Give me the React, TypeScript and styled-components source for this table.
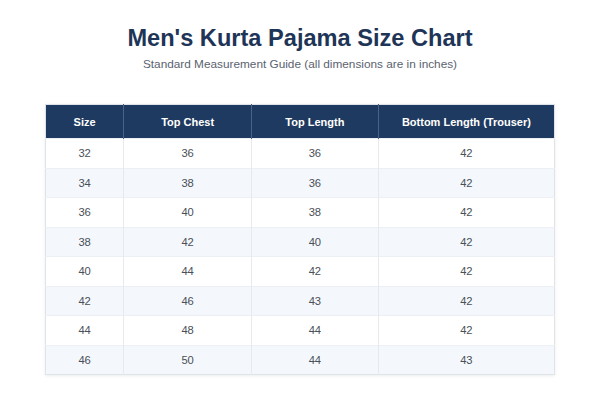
import React from "react";
import styled, { createGlobalStyle } from "styled-components";

const Global = createGlobalStyle`
  html, body { margin: 0; padding: 0; background: #ffffff; }
  body { font-family: "Liberation Sans", Arial, sans-serif; }
`;

const Page = styled.div`
  width: 600px;
  height: 407px;
  box-sizing: border-box;
  padding: 24px 45px 0;
  display: flex;
  flex-direction: column;
  align-items: center;
`;

const Title = styled.h1`
  margin: 0;
  font-size: 23.6px;
  font-weight: 700;
  color: #1e3557;
  line-height: 28px;
`;

const Subtitle = styled.p`
  margin: 4px 0 0;
  font-size: 11.8px;
  color: #5a6270;
  line-height: 16px;
`;

const Table = styled.table`
  margin-top: 32px;
  width: 510px;
  border-collapse: collapse;
  table-layout: fixed;
  border: 1px solid #dfe4ea;
  box-shadow: 0 1px 3px rgba(0, 0, 0, 0.08);
`;

const Th = styled.th<{ $w: string }>`
  width: ${(p) => p.$w};
  background: #1f3a60;
  color: #ffffff;
  font-size: 11px;
  font-weight: 700;
  height: 33px;
  padding: 0;
  text-align: center;
  border-right: 1px solid #4a6283;
  &:last-child { border-right: none; }
`;

const Tr = styled.tr<{ $alt: boolean }>`
  background: ${(p) => (p.$alt ? "#f4f8fc" : "#ffffff")};
`;

const Td = styled.td`
  height: 28.5px;
  padding: 0;
  text-align: center;
  font-size: 11.2px;
  color: #4a4f58;
  border-right: 1px solid #e6eaef;
  border-top: 1px solid #eceff3;
  &:last-child { border-right: none; }
`;

const rows = [
  ["32", "36", "36", "42"],
  ["34", "38", "36", "42"],
  ["36", "40", "38", "42"],
  ["38", "42", "40", "42"],
  ["40", "44", "42", "42"],
  ["42", "46", "43", "42"],
  ["44", "48", "44", "42"],
  ["46", "50", "44", "43"],
];

const headers: [string, string][] = [
  ["Size", "15.3%"],
  ["Top Chest", "25.1%"],
  ["Top Length", "24.9%"],
  ["Bottom Length (Trouser)", "34.7%"],
];

export default function App() {
  return (
    <>
      <Global />
      <Page>
        <Title>Men's Kurta Pajama Size Chart</Title>
        <Subtitle>Standard Measurement Guide (all dimensions are in inches)</Subtitle>
        <Table>
          <thead>
            <tr>
              {headers.map(([h, w]) => (
                <Th key={h} $w={w}>{h}</Th>
              ))}
            </tr>
          </thead>
          <tbody>
            {rows.map((r, i) => (
              <Tr key={i} $alt={i % 2 === 1}>
                {r.map((c, j) => (
                  <Td key={j}>{c}</Td>
                ))}
              </Tr>
            ))}
          </tbody>
        </Table>
      </Page>
    </>
  );
}
